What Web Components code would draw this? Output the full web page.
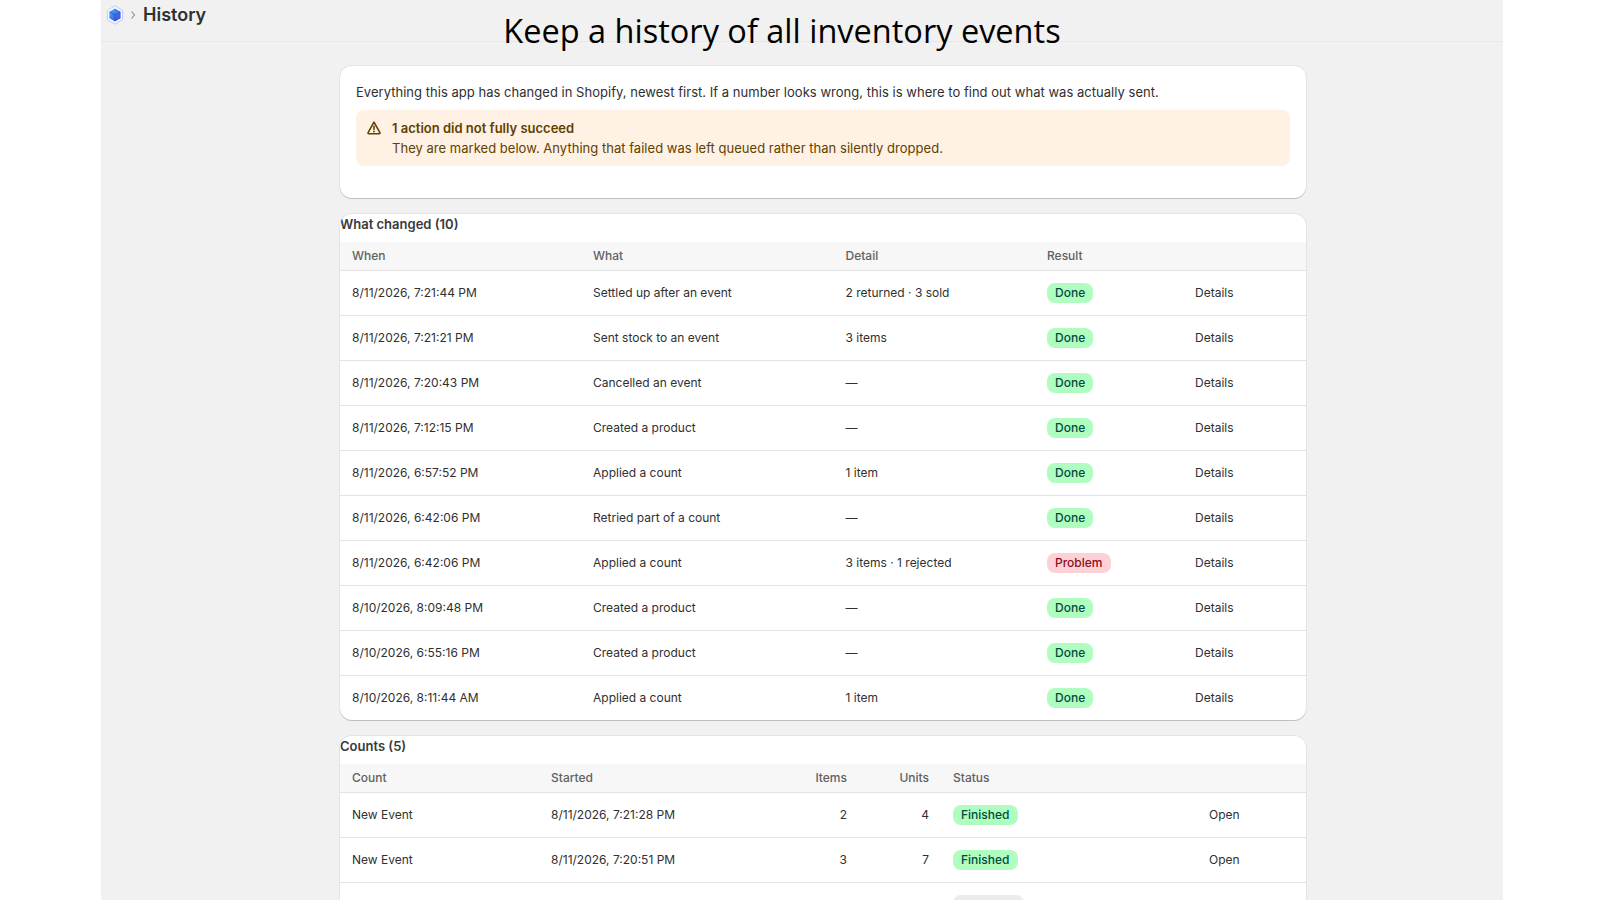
<!DOCTYPE html>
<html>
<head>
<meta charset="utf-8">
<title>History</title>
<style>
  html, body { margin: 0; height: 100%; background: #fff; overflow: hidden; }
  body { font-family: Inter, "Liberation Sans", sans-serif; color: #303030; }
</style>
</head>
<body>

<app-frame>
  <page-topbar slot="top" heading="History"></page-topbar>
  <promo-title slot="overlay">Keep a history of all inventory events</promo-title>

  <info-card>
    <p>Everything this app has changed in Shopify, newest first. If a number looks wrong, this is where to find out what was actually sent.</p>
    <warn-banner heading="1 action did not fully succeed">They are marked below. Anything that failed was left queued rather than silently dropped.</warn-banner>
  </info-card>

  <data-table heading="What changed (10)" columns="241px 252.5px 201.5px 148px 1fr">
    <table-row head><span>When</span><span>What</span><span>Detail</span><span>Result</span><span></span></table-row>
    <table-row><span>8/11/2026, 7:21:44 PM</span><span>Settled up after an event</span><span>2 returned · 3 sold</span><span><status-badge>Done</status-badge></span><span>Details</span></table-row>
    <table-row><span>8/11/2026, 7:21:21 PM</span><span>Sent stock to an event</span><span>3 items</span><span><status-badge>Done</status-badge></span><span>Details</span></table-row>
    <table-row><span>8/11/2026, 7:20:43 PM</span><span>Cancelled an event</span><span>—</span><span><status-badge>Done</status-badge></span><span>Details</span></table-row>
    <table-row><span>8/11/2026, 7:12:15 PM</span><span>Created a product</span><span>—</span><span><status-badge>Done</status-badge></span><span>Details</span></table-row>
    <table-row><span>8/11/2026, 6:57:52 PM</span><span>Applied a count</span><span>1 item</span><span><status-badge>Done</status-badge></span><span>Details</span></table-row>
    <table-row><span>8/11/2026, 6:42:06 PM</span><span>Retried part of a count</span><span>—</span><span><status-badge>Done</status-badge></span><span>Details</span></table-row>
    <table-row><span>8/11/2026, 6:42:06 PM</span><span>Applied a count</span><span>3 items · 1 rejected</span><span><status-badge tone="critical">Problem</status-badge></span><span>Details</span></table-row>
    <table-row><span>8/10/2026, 8:09:48 PM</span><span>Created a product</span><span>—</span><span><status-badge>Done</status-badge></span><span>Details</span></table-row>
    <table-row><span>8/10/2026, 6:55:16 PM</span><span>Created a product</span><span>—</span><span><status-badge>Done</status-badge></span><span>Details</span></table-row>
    <table-row last><span>8/10/2026, 8:11:44 AM</span><span>Applied a count</span><span>1 item</span><span><status-badge>Done</status-badge></span><span>Details</span></table-row>
  </data-table>

  <data-table heading="Counts (5)" columns="199px 255px 65px 82px 256px 1fr">
    <table-row head><span>Count</span><span>Started</span><span data-end>Items</span><span data-end>Units</span><span>Status</span><span></span></table-row>
    <table-row><span>New Event</span><span>8/11/2026, 7:21:28 PM</span><span data-end>2</span><span data-end>4</span><span><status-badge>Finished</status-badge></span><span>Open</span></table-row>
    <table-row><span>New Event</span><span>8/11/2026, 7:20:51 PM</span><span data-end>3</span><span data-end>7</span><span><status-badge>Finished</status-badge></span><span>Open</span></table-row>
    <table-row><span></span><span></span><span></span><span></span><span><status-badge tone="neutral" style="width:71px;box-sizing:border-box"></status-badge></span><span></span></table-row>
  </data-table>
</app-frame>

<script>
// small helper, every element just sets its shadow html once
class Base extends HTMLElement {
    constructor() {
        super();
        this.attachShadow({ mode: 'open' });
    }
    connectedCallback() {
        this.shadowRoot.innerHTML = this.markup();
    }
}

class AppFrame extends Base {
    markup() {
        return `
            <style>
                :host { display: block; position: relative; width: 1402px; height: 900px; margin-left: 101px; background: #f1f1f1; overflow: hidden; }
                main { display: flex; flex-direction: column; gap: 16px; width: 966px; margin: 24px 0 0 239px; }
            </style>
            <slot name="top"></slot>
            <slot name="overlay"></slot>
            <main><slot></slot></main>
        `;
    }
}

class PageTopbar extends Base {
    markup() {
        return `
            <style>
                :host { display: flex; align-items: center; height: 42px; box-sizing: border-box; padding: 0 0 12px 5px; border-bottom: 1px solid #e8e8e8; }
                svg { display: block; }
                .chev { margin: 0 7px 0 6px; }
                h1 { margin: 0; font: 600 18px/28px Inter, "Liberation Sans", sans-serif; color: #303030; }
            </style>
            <svg width="18" height="20" viewBox="0 0 18 20">
                <defs>
                    <linearGradient id="g" x1="0" y1="0" x2="1" y2="1">
                        <stop offset="0" stop-color="#46b4ee"/><stop offset="1" stop-color="#3a3fe0"/>
                    </linearGradient>
                    <linearGradient id="h" x1="0" y1="0" x2="1" y2="1">
                        <stop offset="0" stop-color="#a8e0f5"/><stop offset="1" stop-color="#c9b8f7"/>
                    </linearGradient>
                </defs>
                <path d="M9 .8l7.6 4.5v9.4L9 19.2l-7.6-4.5V5.3z" fill="#f8f9fe" stroke="url(#h)" stroke-width="1"/>
                <path d="M9 3.6l5.6 3.2v6.4L9 16.4l-5.6-3.2V6.8z" fill="url(#g)"/>
                <path d="M3.8 7L9 10l5.2-3M9 10v6" fill="none" stroke="#2b46c8" stroke-width=".7"/>
            </svg>
            <svg class="chev" width="6" height="10" viewBox="0 0 6 10"><path d="M1.5 1.5L4.5 5l-3 3.5" fill="none" stroke="#8a8a8a" stroke-width="1.1"/></svg>
            <h1>${this.getAttribute('heading')}</h1>
        `;
    }
}

class PromoTitle extends Base {
    markup() {
        return `
            <style>
                :host { display: block; position: absolute; left: 0; top: 8px; width: 1362px; text-align: center; font: 400 32.5px/46px "Open Sans", sans-serif; color: #000; z-index: 2; }
            </style>
            <slot></slot>
        `;
    }
}

class InfoCard extends Base {
    markup() {
        return `
            <style>
                :host { display: block; box-sizing: border-box; height: 132px; padding: 16px; background: #fff; border-radius: 12px; box-shadow: 0 1px 0 rgba(0,0,0,.16), 0 0 0 1px rgba(0,0,0,.05); font-size: 13px; line-height: 20px; color: #303030; letter-spacing: .027px; }
                ::slotted(p) { margin: 0 0 8px; }
            </style>
            <slot></slot>
        `;
    }
}

class WarnBanner extends Base {
    markup() {
        return `
            <style>
                :host { display: flex; gap: 8px; padding: 8px; background: #fff1e3; border-radius: 8px; color: #5e4200; font-size: 13px; line-height: 20px; }
                svg { flex: none; display: block; }
                strong { display: block; font-weight: 600; letter-spacing: 0; }
            </style>
            <svg width="20" height="20" viewBox="0 0 20 20">
                <path d="M10 4.2l5.9 10.4c.3.6-.1 1.2-.7 1.2H4.8c-.6 0-1-.6-.7-1.2z" fill="none" stroke="#5e4200" stroke-width="1.6" stroke-linejoin="round"/>
                <path d="M10 8.2v3.2" stroke="#5e4200" stroke-width="1.5" stroke-linecap="round"/>
                <circle cx="10" cy="13.5" r=".9" fill="#5e4200"/>
            </svg>
            <div><strong>${this.getAttribute('heading')}</strong><slot></slot></div>
        `;
    }
}

class DataTable extends Base {
    markup() {
        return `
            <style>
                :host { display: block; flex: none; background: #fff; border-radius: 12px; overflow: hidden; box-shadow: 0 1px 0 rgba(0,0,0,.16), 0 0 0 1px rgba(0,0,0,.05); --cols: ${this.getAttribute('columns')}; }
                h2 { margin: 0; height: 28px; font: 600 13px/20px Inter, "Liberation Sans", sans-serif; color: #3a3a3a; }
            </style>
            <h2>${this.getAttribute('heading')}</h2>
            <slot></slot>
        `;
    }
}

class TableRow extends Base {
    markup() {
        return `
            <style>
                :host { display: grid; grid-template-columns: var(--cols); align-items: center; box-sizing: border-box; height: 45px; border-bottom: 1px solid #e3e3e3; font-size: 12px; line-height: 16px; color: #303030; }
                :host([head]) { height: 29px; background: #f7f7f7; color: #616161; font-weight: 500; }
                :host([last]) { height: 44px; border-bottom: 0; }
                ::slotted(span) { padding: 0 12px; display: block; }
                ::slotted([data-end]) { text-align: right; }
            </style>
            <slot></slot>
        `;
    }
}

class StatusBadge extends Base {
    markup() {
        return `
            <style>
                :host { display: inline-block; height: 20px; padding: 0 8px; border-radius: 8px; background: #affebf; color: #014b40; font-size: 12px; line-height: 20px; font-weight: 500; vertical-align: top; }
                :host([tone="critical"]) { background: #fed1d7; color: #8e0b21; }
                :host([tone="neutral"]) { background: #ebebeb; color: #616161; }
            </style>
            <slot></slot>
        `;
    }
}

customElements.define('app-frame', AppFrame);
customElements.define('page-topbar', PageTopbar);
customElements.define('promo-title', PromoTitle);
customElements.define('info-card', InfoCard);
customElements.define('warn-banner', WarnBanner);
customElements.define('data-table', DataTable);
customElements.define('table-row', TableRow);
customElements.define('status-badge', StatusBadge);
</script>
</body>
</html>
